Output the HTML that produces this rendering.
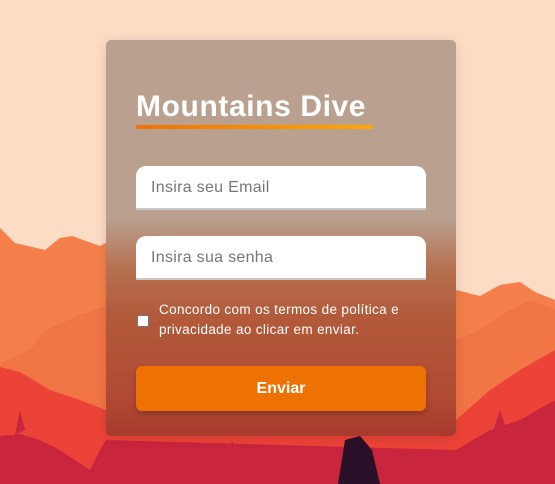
<!DOCTYPE html>
<html><head><meta charset="utf-8"><style>
html,body{margin:0;padding:0;width:555px;height:484px;overflow:hidden;background:#fddcc6;font-family:"Liberation Sans",sans-serif}
svg.bg{position:absolute;left:0;top:0}
.card{position:absolute;left:106px;top:40px;width:350px;height:396px;border-radius:5px;
background:linear-gradient(180deg,#b9a08f 0%,#b9a08f 45%,#b6704f 58%,#b25a3a 70%,#b04a33 90%,#a83a2e 100%);
box-shadow:0 2px 12px rgba(0,0,0,.12)}
.title{position:absolute;left:136px;top:90px;font-size:30px;font-weight:bold;color:#fff;letter-spacing:0.6px}
.ul{position:absolute;left:136px;top:125px;width:237px;height:4px;border-radius:2px;background:linear-gradient(90deg,#ee7203,#ffa800)}
.inp{position:absolute;left:136px;width:290px;height:42px;background:#fff;border-radius:10px 10px 0 0;border-bottom:2px solid #c8c8c8;box-sizing:content-box}
.inp span{position:absolute;left:15px;top:13px;font-size:16px;color:#777;letter-spacing:0.3px}
.cb{position:absolute;left:137px;top:315px;width:10px;height:10px;background:#fff;border:1px solid #777;border-radius:2px}
.txt{position:absolute;left:159px;top:300px;font-size:13.5px;line-height:20px;color:#fff;letter-spacing:0.35px}
.btn{position:absolute;left:136px;top:366px;width:290px;height:45px;background:#ee7203;border-radius:6px;color:#fff;font-weight:bold;font-size:16px;text-align:center;line-height:45px;box-shadow:0 3px 6px rgba(0,0,0,.2)}
</style></head><body>
<svg class="bg" width="555" height="484" viewBox="0 0 555 484">
<polygon fill="#f47f4a" points="0,228 15,243 45,250 60,238 72,236 100,246 130,230 160,215 200,200 250,195 300,205 350,215 400,240 456,290 480,296 500,285 520,282 535,292 555,300 555,484 0,484"/>
<polygon fill="#f27545" points="0,363 30,350 45,330 80,315 106,306 456,340 480,330 510,310 530,300 555,310 555,484 0,484"/>
<polygon fill="#ec4338" points="0,367 20,372 50,390 80,400 106,410 456,420 490,390 520,370 555,350 555,484 0,484"/>
<polygon fill="#c9253d" points="0,436 20,434 40,440 60,450 75,460 90,470 100,450 106,440 456,450 490,430 520,420 555,400 555,484 0,484"/>
<polygon fill="#c9253d" points="15,435 20,410 25,430"/>
<polygon fill="#c9253d" points="225,470 232,440 240,470"/>
<polygon fill="#c9253d" points="490,440 500,410 510,440"/>
<polygon fill="#2a1028" points="338,484 345,440 360,436 372,450 380,484"/>
</svg>
<div class="card"></div>
<div class="title">Mountains Dive</div>
<div class="ul"></div>
<div class="inp" style="top:166px"><span>Insira seu Email</span></div>
<div class="inp" style="top:236px"><span>Insira sua senha</span></div>
<div class="cb"></div>
<div class="txt">Concordo com os termos de política e<br>privacidade ao clicar em enviar.</div>
<div class="btn">Enviar</div>
</body></html>
